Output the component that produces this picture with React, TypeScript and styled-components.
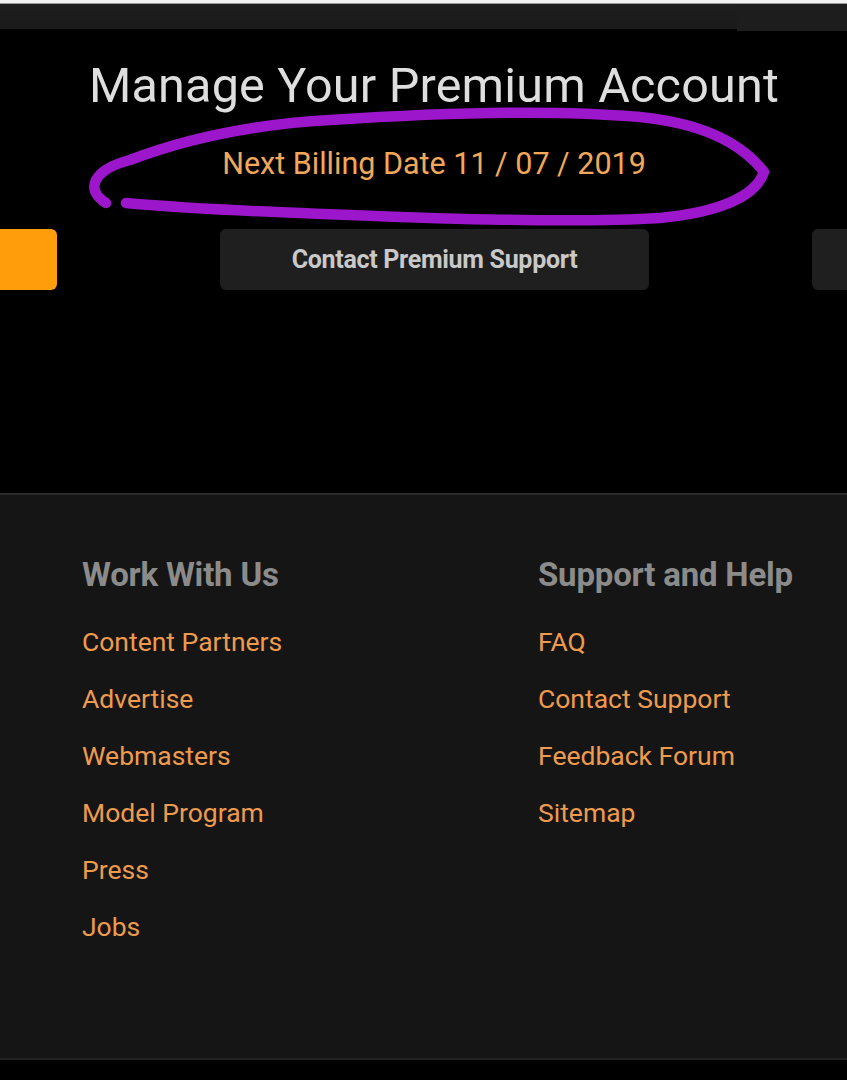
import React from "react";
import styled, { createGlobalStyle } from "styled-components";

const Global = createGlobalStyle`
  html, body { margin: 0; padding: 0; background: #000; }
  body { font-family: Roboto, "Liberation Sans", Arial, sans-serif; overflow: hidden; }
  * { box-sizing: border-box; }
`;

const Page = styled.div`
  width: 847px;
  height: 1080px;
  display: flex;
  flex-direction: column;
  background: #000;
  overflow: hidden;
`;

const TopStrip = styled.div`
  height: 4px;
  background: #f2f2f2;
  border-bottom: 1px solid #9a9a9a;
`;

const TopBar = styled.div`
  height: 25px;
  display: flex;
`;

const TopBarMain = styled.div`
  flex: 1;
  background: linear-gradient(#1e1e1e, #1a1a1a);
`;

const TopBarSide = styled.div`
  width: 110px;
  height: 27px;
  background: #1d1d1d;
`;

const Hero = styled.section`
  position: relative;
  height: 464px;
  display: flex;
  flex-direction: column;
  align-items: center;
  padding-top: 28px;
  padding-left: 21px;
`;

const Title = styled.h1`
  margin: 0;
  font-weight: 400;
  font-size: 48.5px;
  line-height: 58px;
  color: #dedede;
  letter-spacing: 0.2px;
  position: relative;
  z-index: 1;
`;

const Billing = styled.div`
  margin-top: 29px;
  font-size: 30.5px;
  line-height: 40px;
  color: #f2a85a;
  position: relative;
  z-index: 1;
`;

const Scribble = styled.svg`
  position: absolute;
  left: 0;
  top: 71px;
  width: 847px;
  height: 140px;
  pointer-events: none;
`;

const ButtonRow = styled.div`
  margin-top: 45px;
  margin-left: -21px;
  width: 847px;
  display: flex;
  justify-content: space-between;
  align-items: center;
`;

const Btn = styled.div<{ $variant: "orange" | "dark" | "stub" }>`
  height: 61px;
  border-radius: 6px;
  display: flex;
  align-items: center;
  justify-content: center;
  font-weight: 700;
  font-size: 25px;
  color: #c9c9c9;
  letter-spacing: -0.3px;
  background: ${(p) => (p.$variant === "orange" ? "#ff9d0a" : "#1f1f1f")};
  width: ${(p) => (p.$variant === "dark" ? "429px" : p.$variant === "orange" ? "80px" : "60px")};
  margin-left: ${(p) => (p.$variant === "orange" ? "-23px" : "0")};
  margin-right: ${(p) => (p.$variant === "stub" ? "-25px" : "0")};
`;

const Footer = styled.footer`
  flex: 1;
  background: #151515;
  border-top: 2px solid #2b2b2b;
  border-bottom: 2px solid #222;
  display: grid;
  grid-template-columns: 456px 1fr;
  padding: 58px 0 0 82px;
  margin-bottom: 20px;
`;

const Column = styled.div`
  display: flex;
  flex-direction: column;
`;

const Heading = styled.h3`
  margin: 0 0 16px;
  font-size: 33px;
  line-height: 44px;
  font-weight: 700;
  color: #8b8b8b;
  letter-spacing: -0.2px;
`;

const Link = styled.a`
  font-size: 26.5px;
  line-height: 57px;
  color: #ee9b4e;
  text-decoration: none;
`;

const work = ["Content Partners", "Advertise", "Webmasters", "Model Program", "Press", "Jobs"];
const support = ["FAQ", "Contact Support", "Feedback Forum", "Sitemap"];

export default function App() {
  return (
    <Page>
      <Global />
      <TopStrip />
      <TopBar>
        <TopBarMain />
        <TopBarSide />
      </TopBar>
      <Hero>
        <Scribble viewBox="0 100 847 140">
          <path
            d="M106,203 C85,190 92,170 130,160 C190,137 260,124 330,120 C450,112 560,110 640,117 C700,123 740,141 764,172 C756,196 720,212 660,218 C560,224 400,217 300,213 C220,210 160,206 126,203"
            fill="none"
            stroke="#9c16cb"
            strokeWidth="10.5"
            strokeLinecap="round"
            strokeLinejoin="round"
          />
        </Scribble>
        <Title>Manage Your Premium Account</Title>
        <Billing>Next Billing Date 11 / 07 / 2019</Billing>
        <ButtonRow>
          <Btn $variant="orange" />
          <Btn $variant="dark">Contact Premium Support</Btn>
          <Btn $variant="stub" />
        </ButtonRow>
      </Hero>
      <Footer>
        <Column>
          <Heading>Work With Us</Heading>
          {work.map((w) => (
            <Link key={w}>{w}</Link>
          ))}
        </Column>
        <Column>
          <Heading>Support and Help</Heading>
          {support.map((w) => (
            <Link key={w}>{w}</Link>
          ))}
        </Column>
      </Footer>
    </Page>
  );
}
